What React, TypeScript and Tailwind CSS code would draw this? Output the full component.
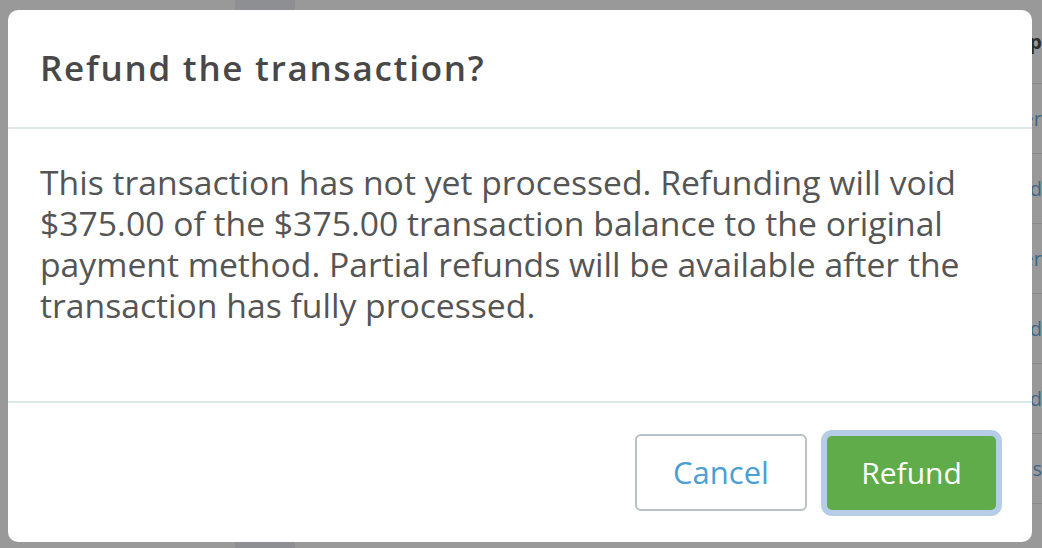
import React from 'react';

// Rows of the page table peeking out at the right edge, behind the overlay
const rows = ['Transfer', 'Refund', 'Transfer', 'Refund', 'Refund', 'Process'];

const RefundModal: React.FC = () => {
  return (
    <div className="absolute left-[8px] top-[10px] w-[1024px] h-[532px] rounded-[10px] bg-white overflow-hidden flex flex-col">
      {/* Header */}
      <div className="h-[119px] shrink-0 px-[32px] pb-[2px] flex items-center border-b-2 border-[#dce7ea]">
        <h2 className="text-[35px] leading-[48px] font-semibold text-[#484848] tracking-[1.75px]">Refund the transaction?</h2>
      </div>

      {/* Body */}
      <div className="h-[274px] shrink-0 px-[32px] pt-[33px] border-b-2 border-[#dce7ea]">
        <p className="text-[33.7px] leading-[41px] text-[#555555] whitespace-nowrap">
          This transaction has not yet processed. Refunding will void
          <br />
          $375.00 of the $375.00 transaction balance to the original
          <br />
          payment method. Partial refunds will be available after the
          <br />
          transaction has fully processed.
        </p>
      </div>

      {/* Footer */}
      <div className="flex-1 flex items-center justify-end gap-[20px] pr-[36px]">
        <button className="w-[172px] h-[77px] border-2 border-[#b9c0c6] rounded-[6px] bg-white text-[#4b9fd5] text-[31px]">
          Cancel
        </button>
        <button className="w-[169px] h-[74px] rounded-[5px] bg-[#60ab4a] text-white text-[30px] ring-[6px] ring-[#b5cde6]">
          Refund
        </button>
      </div>
    </div>
  );
};

const App: React.FC = () => {
  return (
    <div
      className="relative w-[1042px] h-[548px] overflow-hidden bg-[#999999] flex"
      style={{ fontFamily: '"Open Sans", "Noto Sans", sans-serif' }}
    >
      {/* Dimmed page underneath */}
      <div className="w-[235px] shrink-0" />
      <div className="w-[60px] shrink-0 bg-[#8e8f93]" />
      <div className="flex-1 flex justify-end">
        <div className="w-[10px] shrink-0 flex flex-col text-[20px] whitespace-nowrap">
          <div className="h-[84px] shrink-0 flex items-center justify-end overflow-hidden font-bold text-[#2e2e2e] border-b border-[#8a8a8a]">
            Group
          </div>
          {rows.map((r, i) => (
            <div
              key={i}
              className="h-[70px] shrink-0 flex items-center justify-end overflow-hidden text-[#3f6688] border-b border-[#8a8a8a]"
            >
              {r}
            </div>
          ))}
        </div>
      </div>

      <RefundModal />
    </div>
  );
};

export default App;
